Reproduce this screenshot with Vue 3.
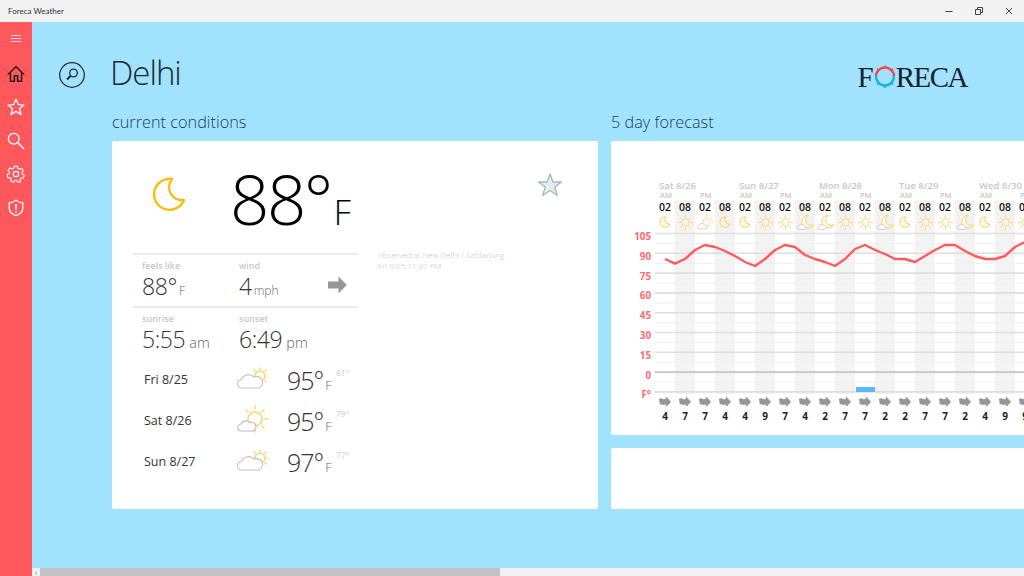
<template>
  <div class="window">
    <svg class="defs" width="0" height="0">
      <symbol id="sun" viewBox="0 0 32 32">
        <circle cx="16" cy="16" r="7" fill="none" stroke="#ffd466" stroke-width="1.800" />
        <path d="M16 2v5M16 25v5M2 16h5M25 16h5M6 6l3.500 3.500M22.500 22.500L26 26M26 6l-3.500 3.500M9.500 22.500L6 26" stroke="#ffd466" stroke-width="1.800" fill="none" />
      </symbol>
      <symbol id="moon" viewBox="0 0 36 36">
        <path d="M21 3A15.500 15.500 0 1 0 33 24A13 13 0 0 1 21 3Z" fill="none" stroke="currentColor" stroke-linejoin="round" />
      </symbol>
      <symbol id="cloudsun" viewBox="0 0 32 28">
        <circle cx="18" cy="14" r="7" fill="#fff" stroke="#ffd466" stroke-width="1.500" />
        <path d="M18 0.500v4M18 23.500v4M27.500 14h4M8.500 4.500l3 3M24.500 20.500l3 3M27.500 4.500l-3 3" stroke="#ffd466" stroke-width="1.400" fill="none" />
        <path d="M4.500 26a3.500 3.500 0 0 1-.5-7a5 5 0 0 1 8.500-1.500a4.300 4.300 0 0 1 3.500 8.500z" fill="#fff" stroke="#bdbdbd" stroke-width="1.200" />
      </symbol>
      <symbol id="suncloud" viewBox="0 0 32 22">
        <circle cx="23" cy="9" r="5" fill="#fff" stroke="#ffd466" stroke-width="1.400" />
        <path d="M23 .5v2.500M31.500 9h-2.500M16.500 2.500l2 2M29.500 2.500l-2 2M29.500 15.500l-2-2" stroke="#ffd466" stroke-width="1.200" fill="none" />
        <path d="M5 21a4.200 4.200 0 0 1-.5-8.400a7.500 7.500 0 0 1 12.500-2.600a5.800 5.800 0 0 1 5 11z" fill="#fff" stroke="#c4c4c4" stroke-width="1.200" />
      </symbol>
      <symbol id="cloudmoon" viewBox="0 0 32 32">
        <path d="M21 3A11.500 11.500 0 1 0 31 20A9.500 9.500 0 0 1 21 3Z" fill="#fff" stroke="#ffd466" stroke-width="2" stroke-linejoin="round" />
        <path d="M4 29a3.300 3.300 0 0 1-.5-6.500a4.500 4.500 0 0 1 8-1.300a3.400 3.400 0 0 1 2.500 7.800z" fill="#fff" stroke="#bdbdbd" stroke-width="1.400" />
      </symbol>
      <symbol id="arrow" viewBox="0 0 19 18">
        <path d="M0 5.500H10.500V.5L18.800 9L10.500 17.500V12.500H0Z" fill="#969696" />
      </symbol>
      <symbol id="arrow-sm" viewBox="0 0 12 11">
        <path d="M0 2.800L2.800 2.300L4.300 3.200L6.800 2.900V.3L12 5.800L7.600 10.700L6.800 8.400L4 9L2.800 8.200L.8 8.400Z" fill="#969696" />
      </symbol>
    </svg>

    <header class="titlebar">
      <span class="titlebar__name">Foreca Weather</span>
      <div class="titlebar__controls">
        <svg width="12" height="12" viewBox="0 0 12 12"><path d="M2.500 6.500h7" stroke="#444" fill="none" /></svg>
        <svg width="12" height="12" viewBox="0 0 12 12"><path d="M2.500 4.500h5v5h-5zM4.500 4.500v-2h5v5h-2" stroke="#444" fill="none" /></svg>
        <svg width="12" height="12" viewBox="0 0 12 12"><path d="M3 3l6 6M9 3l-6 6" stroke="#444" fill="none" /></svg>
      </div>
    </header>

    <div class="shell">
      <nav class="rail">
        <div class="rail__burger"><span></span><span></span><span></span></div>
        <svg class="rail__icon" viewBox="0 0 20 20"><path d="M1 10.500L10 2l9 8.500M3.800 8v10h4.400v-6h3.600v6h4.400V8" fill="none" stroke="#2a2023" stroke-width="1.700" /></svg>
        <svg class="rail__icon" viewBox="0 0 20 20"><path d="M10 1.500l2.500 5.800 6.300.6-4.800 4.100 1.500 6.200-5.500-3.300-5.500 3.300 1.500-6.200L1.200 7.900l6.300-.6z" fill="none" stroke="#fff" stroke-width="1.400" stroke-linejoin="round" /></svg>
        <svg class="rail__icon" viewBox="0 0 20 20"><circle cx="7.500" cy="7.500" r="6" fill="none" stroke="#fff" stroke-width="1.400" /><path d="M12 12l7 7" stroke="#fff" stroke-width="1.600" /></svg>
        <svg class="rail__icon" viewBox="0 0 20 20"><circle cx="10" cy="10" r="3" fill="none" stroke="#fff" stroke-width="1.300" /><path d="M8.300 1.500h3.400l.5 2.500 1.700.8 2.300-1.200 2 2.600-1.600 2 .4 1.900 2.200 1.200-.9 3.100-2.600.1-1.200 1.500.5 2.500-3 .7-1.200-2.200h-1.800L7.300 19l-3-.9.500-2.500-1.200-1.500-2.600-.1-.8-3.100 2.200-1.200.4-1.900-1.600-2 2-2.600 2.300 1.200 1.800-.8z" fill="none" stroke="#fff" stroke-width="1.200" stroke-linejoin="round" /></svg>
        <svg class="rail__icon" viewBox="0 0 20 20"><path d="M10 1.500c2.500 1.800 5 2.600 7.500 2.800v6c0 4-3.500 6.800-7.500 8.200-4-1.400-7.500-4.200-7.500-8.200v-6c2.500-.2 5-1 7.500-2.800z" fill="none" stroke="#fff" stroke-width="1.400" /><path d="M10 5.500v6.500M10 13.500v2" stroke="#fff" stroke-width="1.600" /></svg>
      </nav>

      <main class="main">
        <div class="content">
          <div class="top">
            <svg class="top__search" viewBox="0 0 26 26">
              <circle cx="13" cy="13" r="12.300" fill="none" stroke="#1f2a30" stroke-width="1.200" />
              <circle cx="14.500" cy="11" r="3.800" fill="none" stroke="#1f2a30" stroke-width="1.300" />
              <path d="M11.500 14l-3.500 3.500" stroke="#1f2a30" stroke-width="2" />
            </svg>
            <h1 class="top__city">Delhi</h1>
            <div class="logo">
              <span>F</span>
              <svg class="logo__ring" viewBox="0 0 24 24">
                <path d="M3 11.500A9 9 0 0 1 21 11.500" fill="none" stroke="#f4474d" stroke-width="2.400" />
                <path d="M3 11.500A9 9 0 0 0 21 11.500" fill="none" stroke="#12b2e6" stroke-width="2.400" />
                <path d="M12 .2l2 2.500h-4zM20 3l.3 3-3-1zM4 3l-.3 3 3-1z" fill="#f4474d" />
                <path d="M12 23.500l-2-2.500h4zM3.500 20l3-.8-2-2.200zM20.500 20l-3-.8 2-2.200z" fill="#12b2e6" />
              </svg>
              <span class="logo__rest">RECA</span>
            </div>
          </div>

          <div class="panels">
            <section class="col col--now">
              <h2 class="col__title">current conditions</h2>
              <div class="card now">
                <div class="now__head">
                  <svg class="now__moon"><use href="#moon" /></svg>
                  <div class="now__temp">88°<span>F</span></div>
                  <div class="now__side">
                    <svg class="now__star" viewBox="0 0 26 26"><path d="M13 2l3 8h8.500l-6.700 5 2.500 8.500L13 18.500l-7.300 5 2.500-8.500L1.500 10H10z" fill="#e6eced" stroke="#a9b7bd" stroke-width="1.300" stroke-linejoin="round" /></svg>
                    <p class="now__observed">observed at New Delhi / Safdarjung<br />Fri 8/25 11:30 PM</p>
                  </div>
                </div>
                <div class="stats stats--wind">
                  <div class="stat">
                    <div class="stat__label">feels like</div>
                    <div class="stat__value">88°<small>F</small></div>
                  </div>
                  <div class="stat">
                    <div class="stat__label">wind</div>
                    <div class="stat__value">4<small>mph</small></div>
                  </div>
                  <svg class="stats__arrow"><use href="#arrow" /></svg>
                </div>
                <div class="stats">
                  <div class="stat">
                    <div class="stat__label">sunrise</div>
                    <div class="stat__value stat__value--time">5:55<small>am</small></div>
                  </div>
                  <div class="stat">
                    <div class="stat__label">sunset</div>
                    <div class="stat__value stat__value--time">6:49<small>pm</small></div>
                  </div>
                </div>
                <div v-for="d in days" :key="d.name" class="day">
                  <span class="day__name">{{ d.name }}</span>
                  <svg class="day__icon"><use :href="'#' + d.icon" /></svg>
                  <span class="day__high">{{ d.high }}°<small>F</small></span>
                  <span class="day__low">{{ d.low }}°</span>
                </div>
              </div>
            </section>

            <section class="col col--forecast">
              <h2 class="col__title">5 day forecast</h2>
              <div class="card chart">
                <div class="chart__days">
                  <span v-for="d in chartDays" :key="d">{{ d }}</span>
                </div>
                <div class="chart__ampm">
                  <span v-for="(m, i) in ampm" :key="i">{{ m }}</span>
                </div>
                <div class="chart__body">
                  <div class="chart__hours">
                    <div v-for="(c, i) in cols" :key="i" class="slot">
                      <b>{{ i % 2 ? '08' : '02' }}</b>
                      <svg class="slot__icon" :class="{ 'slot__icon--moon': c.icon === 'moon' }"><use :href="'#' + c.icon" /></svg>
                    </div>
                  </div>
                  <div class="chart__plot">
                    <div class="chart__scale">
                      <span v-for="t in scale" :key="t">{{ t }}</span>
                    </div>
                    <svg class="chart__svg" width="400" height="162">
                      <line v-for="n in 8" :key="'m' + n" x1="0" x2="400" :y1="11.500 + (n - 1) * 19.800" :y2="11.500 + (n - 1) * 19.800" stroke="#efefef" />
                      <line v-for="(t, n) in scale" :key="t" x1="0" x2="400" :y1="1.500 + n * 19.800" :y2="1.500 + n * 19.800" :stroke="t === '0' ? '#c4c4c4' : '#dedede'" stroke-width="1.600" />
                      <rect x="201" y="155" width="19" height="5" fill="#5ab6ff" />
                      <polyline :points="tempLine" fill="none" stroke="#ff5a5f" stroke-width="2.400" stroke-linejoin="round" />
                    </svg>
                  </div>
                </div>
                <div class="chart__winds">
                  <div v-for="(c, i) in cols" :key="i" class="wind">
                    <svg class="wind__arrow"><use href="#arrow-sm" /></svg>
                    <b>{{ c.wind }}</b>
                  </div>
                </div>
              </div>
              <div class="card extra"></div>
            </section>
          </div>
        </div>

        <div class="scroll">
          <div class="scroll__left">‹</div>
          <div class="scroll__thumb"></div>
        </div>
      </main>
    </div>
  </div>
</template>

<script setup>
const days = [
  { name: 'Fri 8/25', icon: 'suncloud', high: 95, low: 81 },
  { name: 'Sat 8/26', icon: 'cloudsun', high: 95, low: 79 },
  { name: 'Sun 8/27', icon: 'suncloud', high: 97, low: 77 },
]

const chartDays = ['Sat 8/26', 'Sun 8/27', 'Mon 8/28', 'Tue 8/29', 'Wed 8/30']
const ampm = ['AM', 'PM', 'AM', 'PM', 'AM', 'PM', 'AM', 'PM', 'AM', 'PM']
const scale = ['105', '90', '75', '60', '45', '30', '15', '0', 'F°']

const icons = ['moon', 'sun', 'cloudsun', 'moon', 'moon', 'sun', 'sun', 'cloudmoon', 'cloudmoon', 'sun', 'sun', 'cloudmoon', 'moon', 'sun', 'sun', 'cloudmoon', 'moon', 'sun', 'sun', 'sun']
const winds = [4, 7, 7, 4, 4, 9, 7, 4, 2, 7, 7, 2, 2, 7, 7, 2, 4, 9, 9, 7]
const cols = icons.map((icon, i) => ({ icon, wind: winds[i] }))

// screen y of the temperature curve, one point every 10px
const temps = [259, 263.7, 259, 250, 245, 247, 251, 256, 262, 266, 259, 250, 245, 247, 255, 259, 262, 266, 259, 249, 245, 250, 254, 259, 259, 262, 256, 250, 245, 245, 251, 256, 259, 259, 256, 247, 242]
const tempLine = temps.map((y, i) => `${10 + i * 10},${y - 232}`).join(' ')
</script>

<style>
html,
body {
  margin: 0;
  overflow: hidden;
}
</style>

<style scoped>
.window {
  width: 1024px;
  height: 576px;
  display: flex;
  flex-direction: column;
  overflow: hidden;
  font-family: "Open Sans", "Liberation Sans", sans-serif;
  color: #222;
}

.defs {
  position: absolute;
}

.titlebar {
  height: 22px;
  flex: none;
  display: flex;
  align-items: center;
  justify-content: space-between;
  background: #f2f2f2;
  padding-left: 8px;
  font-family: Lato, "Open Sans", sans-serif;
  font-size: 8px;
  color: #333;
}

.titlebar__controls {
  display: flex;
  gap: 18px;
  padding-right: 9px;
}

.shell {
  flex: 1;
  display: flex;
  min-height: 0;
}

.rail {
  width: 32px;
  flex: none;
  background: #ff585c;
  display: flex;
  flex-direction: column;
  align-items: center;
  gap: 15.500px;
  padding-top: 13px;
  box-sizing: border-box;
}

.rail__burger {
  display: flex;
  flex-direction: column;
  gap: 2px;
  margin-bottom: 7px;
}

.rail__burger span {
  display: block;
  width: 10px;
  height: 1px;
  background: #ffd4d5;
}

.rail__icon {
  width: 18px;
  height: 18px;
  flex: none;
}

.main {
  flex: 1;
  min-width: 0;
  display: flex;
  flex-direction: column;
  background: #a1e3ff;
}

.content {
  flex: 1;
  min-height: 0;
  overflow: hidden;
}

.top {
  height: 90px;
  box-sizing: border-box;
  padding: 32px 57px 0 27px;
  display: flex;
  align-items: flex-start;
}

.top__search {
  width: 26px;
  height: 26px;
  margin-top: 8px;
}

.top__city {
  margin: 0 0 0 25px;
  font-size: 33px;
  font-weight: 300;
  letter-spacing: -1px;
  line-height: 38px;
  color: #1d2a33;
}

.logo {
  margin-left: auto;
  margin-top: 8px;
  display: flex;
  align-items: center;
  font-family: "Liberation Serif", serif;
  font-size: 29px;
  line-height: 30px;
  color: #16222b;
}

.logo__ring {
  width: 24px;
  height: 24px;
  margin: 0 -1px;
}

.logo__rest {
  letter-spacing: -1.500px;
}

.panels {
  display: flex;
  gap: 13px;
  padding-left: 80px;
}

.col {
  flex: none;
}

.col--now {
  width: 486px;
}

.col--forecast {
  width: 500px;
}

.col__title {
  margin: 0 0 9px;
  font-size: 16.300px;
  font-weight: 300;
  line-height: 20px;
  color: #25404e;
}

.card {
  background: #fff;
  border-radius: 2px;
}

.now {
  height: 368px;
  box-sizing: border-box;
  padding: 0 21px;
}

.now__head {
  height: 112px;
  display: flex;
  position: relative;
}

.now__moon {
  width: 36px;
  height: 36px;
  margin: 35px 0 0 18px;
  color: #fbbc11;
  stroke-width: 2.400;
}

.now__temp {
  margin-left: 43px;
  margin-top: 14px;
  font-size: 69px;
  font-weight: 300;
  letter-spacing: -2.500px;
  line-height: 86px;
  color: #000;
  height: 86px;
  white-space: nowrap;
}

.now__temp span {
  font-size: 34px;
  margin-left: 3px;
  letter-spacing: 0;
}

.now__side {
  position: absolute;
  left: 245px;
  top: 0;
  width: 220px;
}

.now__star {
  position: absolute;
  left: 159px;
  top: 31px;
  width: 26px;
  height: 26px;
}

.now__observed {
  margin: 0;
  position: absolute;
  top: 109px;
  white-space: nowrap;
  font-size: 8px;
  line-height: 10.500px;
  font-weight: 300;
  color: #c4c4c4;
}

.stats {
  width: 225px;
  height: 53px;
  box-sizing: border-box;
  border-top: 2px solid #ececec;
  display: flex;
  position: relative;
}

.stat {
  width: 97px;
  padding-left: 9px;
  box-sizing: border-box;
  padding-top: 5px;
}

.stat__label {
  font-size: 9px;
  line-height: 11px;
  font-weight: 600;
  color: #c8c8c8;
}

.stat__value {
  font-size: 23px;
  font-weight: 300;
  line-height: 30px;
  letter-spacing: -.4px;
  color: #333;
  white-space: nowrap;
}

.stat__value small {
  font-size: 12px;
  margin-left: 2px;
  letter-spacing: 0;
  color: #666;
}

.stat__value--time small {
  font-size: 14.500px;
  margin-left: 4px;
}

.stats__arrow {
  position: absolute;
  left: 195px;
  top: 21px;
  width: 19px;
  height: 18px;
}

.day {
  height: 41px;
  display: flex;
  align-items: center;
  padding-left: 11px;
}

.day__name {
  width: 93px;
  font-size: 12.500px;
  color: #333;
}

.day__icon {
  width: 32px;
  height: 28px;
  flex: none;
  margin-top: -3px;
}

.day__high {
  margin-left: 18px;
  width: 49px;
  font-size: 25px;
  font-weight: 300;
  letter-spacing: -1px;
  color: #333;
  white-space: nowrap;
}

.day__high small {
  font-size: 12.500px;
  letter-spacing: 0;
  margin-left: 2px;
  color: #666;
}

.day__low {
  align-self: flex-start;
  margin-top: 8px;
  font-size: 8.500px;
  font-weight: 600;
  color: #d8d8d8;
}

.chart {
  height: 294px;
  box-sizing: border-box;
  padding: 38px 0 0 44px;
  overflow: hidden;
}

.chart__days {
  display: flex;
  height: 12px;
}

.chart__days span {
  width: 80px;
  flex: none;
  padding-left: 4px;
  box-sizing: border-box;
  font-size: 9.500px;
  line-height: 14px;
  font-weight: 600;
  color: #c6c6c6;
}

.chart__ampm {
  display: flex;
  height: 9px;
}

.chart__ampm span {
  width: 40px;
  flex: none;
  padding-left: 5px;
  box-sizing: border-box;
  font-size: 7.500px;
  line-height: 9px;
  font-weight: 600;
  color: #c6c6c6;
}

.chart__body {
  width: 400px;
  background: repeating-linear-gradient(to right, transparent 0 20px, #f3f3f3 20px 40px);
}

.chart__hours {
  display: flex;
  height: 32px;
}

.slot {
  width: 20px;
  flex: none;
  text-align: center;
}

.slot b {
  display: block;
  font-size: 10.500px;
  line-height: 14px;
  font-weight: 600;
  color: #111;
}

.slot__icon {
  display: block;
  width: 17px;
  height: 17px;
  margin: 0 auto;
}

.slot__icon--moon {
  color: #ffd466;
  width: 12px;
  height: 12px;
  margin-top: 2px;
  stroke-width: 3.500;
}

.chart__plot {
  position: relative;
  height: 162px;
}

.chart__svg {
  display: block;
}

.chart__scale {
  position: absolute;
  left: -32px;
  top: -5px;
  width: 28px;
  display: flex;
  flex-direction: column;
  align-items: flex-end;
}

.chart__scale span {
  height: 19.800px;
  line-height: 19.800px;
  font-size: 9.800px;
  font-weight: 700;
  color: #ff6a70;
}

.chart__winds {
  display: flex;
  margin-top: 2px;
}

.wind {
  width: 20px;
  flex: none;
  text-align: center;
}

.wind__arrow {
  display: block;
  width: 12px;
  height: 11px;
  margin: 0 auto 3px;
}

.wind b {
  display: block;
  font-size: 10px;
  font-weight: 700;
  line-height: 12px;
  color: #222;
}

.extra {
  height: 61px;
  margin-top: 13px;
}

.scroll {
  height: 8px;
  flex: none;
  background: #f1f1f1;
  display: flex;
}

.scroll__left {
  width: 8px;
  font-size: 8px;
  line-height: 7px;
  text-align: center;
  color: #777;
}

.scroll__thumb {
  width: 460px;
  background: #c2c2c2;
}
</style>
